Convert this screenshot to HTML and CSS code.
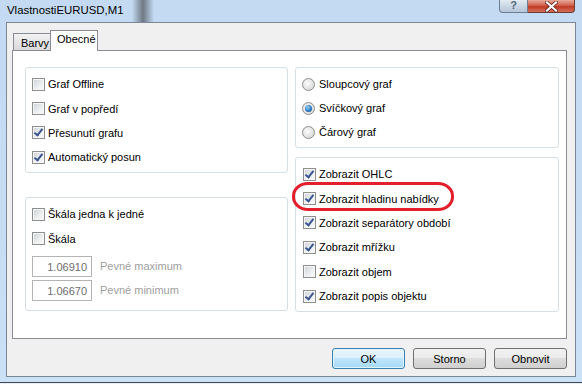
FILE: index.html
```html
<!DOCTYPE html>
<html lang="cs">
<head>
    <meta charset="UTF-8">
    <title>VlastnostiEURUSD,M1</title>
    <link rel="stylesheet" href="styles.css">
</head>
<body>
<div class="window">
    <div class="titlebar">
        <span class="title">VlastnostiEURUSD,M1</span>
        <div class="caption">
            <span class="cap-help">?</span>
            <span class="cap-close">
                <svg width="13" height="11" viewBox="0 0 13 11"><path d="M2 1.5 L11 9.5 M11 1.5 L2 9.5" stroke="#5a1d14" stroke-width="3.6" stroke-linecap="square"/><path d="M2 1.5 L11 9.5 M11 1.5 L2 9.5" stroke="#fff" stroke-width="2.2" stroke-linecap="square"/></svg>
            </span>
        </div>
    </div>
    <div class="client">
        <div class="tabstrip">
            <div class="tab">Barvy</div>
            <div class="tab active">Obecné</div>
        </div>
        <div class="panel">
            <div class="col col-left">
                <div class="group g-view">
                    <label class="row"><span class="cb"></span>Graf Offline</label>
                    <label class="row"><span class="cb"></span>Graf v popředí</label>
                    <label class="row"><span class="cb on"></span>Přesunutí grafu</label>
                    <label class="row"><span class="cb on"></span>Automatický posun</label>
                </div>
                <div class="group g-scale">
                    <label class="row"><span class="cb"></span>Škála jedna k jedné</label>
                    <label class="row"><span class="cb"></span>Škála</label>
                    <div class="field first">
                        <span class="input">1.06910</span>
                        <span class="field-label">Pevné maximum</span>
                    </div>
                    <div class="field">
                        <span class="input">1.06670</span>
                        <span class="field-label">Pevné minimum</span>
                    </div>
                </div>
            </div>
            <div class="col col-right">
                <div class="group g-type">
                    <label class="row radio-row"><span class="rb"></span>Sloupcový graf</label>
                    <label class="row radio-row"><span class="rb on"></span>Svíčkový graf</label>
                    <label class="row radio-row"><span class="rb"></span>Čárový graf</label>
                </div>
                <div class="group g-show">
                    <label class="row"><span class="cb on"></span>Zobrazit OHLC</label>
                    <label class="row"><span class="cb on"></span>Zobrazit hladinu nabídky</label>
                    <label class="row"><span class="cb on"></span>Zobrazit separátory období</label>
                    <label class="row"><span class="cb on"></span>Zobrazit mřížku</label>
                    <label class="row"><span class="cb"></span>Zobrazit objem</label>
                    <label class="row"><span class="cb on"></span>Zobrazit popis objektu</label>
                    <div class="mark"></div>
                </div>
            </div>
        </div>
        <div class="buttons">
            <button type="button" class="btn default">OK</button>
            <button type="button" class="btn">Storno</button>
            <button type="button" class="btn">Obnovit</button>
        </div>
    </div>
</div>
</body>
</html>
```

FILE: styles.css
```css
body {
    margin: 0;
    background: #e9eef4;
    font-family: 'Liberation Sans', Arial, sans-serif;
    font-size: 11px;
    color: #000;
}
.window {
    width: 582px;
    height: 382px;
    border-bottom: 1px solid #3f4a58;
    background:
        linear-gradient(90deg, transparent 132px, rgba(40, 40, 40, 0.55) 143px, transparent 154px) 0 0 / 100% 22px no-repeat,
        linear-gradient(180deg, #c3daf2, #c6ddf4 60%, #cbe1f6);
}
.titlebar {
    height: 22px;
    display: flex;
    align-items: flex-start;
}
.title {
    font-size: 11.4px;
    padding: 4px 0 0 7px;
    color: #000;
}
.caption {
    display: flex;
    margin-left: auto;
    margin-right: 7px;
}
.cap-help {
    width: 27px;
    height: 12px;
    border: 1px solid #6f7f92;
    border-top: none;
    border-radius: 0 0 0 4px;
    background: linear-gradient(180deg, #e4ebf3, #c9d6e4 50%, #b7c7d9);
    color: #556677;
    font-weight: bold;
    font-size: 11px;
    line-height: 11px;
    text-align: center;
}
.cap-close {
    width: 46px;
    height: 12px;
    border: 1px solid #6b3a33;
    border-left: none;
    border-top: none;
    border-radius: 0 0 4px 0;
    background: linear-gradient(180deg, #e9a99b, #d0604b 45%, #c03a26 55%, #d5705a);
    display: flex;
    justify-content: center;
    align-items: center;
}
.client {
    box-sizing: border-box;
    margin-left: 6px;
    width: 570px;
    height: 355px;
    border: 1px solid #7b8796;
    background: #f0f0f0;
    padding: 7px 0 0 5px;
}
.tabstrip {
    display: flex;
    align-items: flex-end;
    height: 20px;
    padding-left: 1px;
}
.tab {
    box-sizing: border-box;
    width: 37px;
    height: 17px;
    border: 1px solid #898c95;
    border-right: none;
    border-bottom: none;
    background: linear-gradient(180deg, #f3f3f3, #e5e5e5 50%, #d9d9d9);
    padding: 3px 0 0 7px;
}
.tab.active {
    position: relative;
    width: 48px;
    height: 21px;
    margin-bottom: -1px;
    border-right: 1px solid #898c95;
    background: #fff;
    padding: 2px 0 0 6px;
}
.panel {
    box-sizing: border-box;
    width: 555px;
    height: 289px;
    border: 1px solid #898c95;
    background: #fff;
    padding: 16px 0 0 12px;
    display: flex;
    gap: 7px;
}
.col {
    display: flex;
    flex-direction: column;
}
.col-left {
    width: 263px;
    gap: 24px;
}
.col-right {
    width: 264px;
    gap: 9px;
}
.group {
    position: relative;
    box-sizing: border-box;
    border: 1px solid #d5dfe5;
    border-radius: 3px;
    padding: 4px 0 0 6px;
}
.g-view { height: 106px; }
.g-scale { height: 114px; }
.g-type { height: 81px; }
.g-show { height: 155px; padding-left: 7px; }
.row {
    display: flex;
    align-items: center;
    height: 24.4px;
    gap: 3px;
}
.radio-row {
    height: 24px;
    gap: 4px;
}
.cb {
    position: relative;
    box-sizing: border-box;
    width: 13px;
    height: 13px;
    border: 1px solid #8e8f8f;
    background: linear-gradient(135deg, #cdd1d6, #eef0f2 60%, #fafafa);
    box-shadow: inset 0 0 0 1px #f6f6f6;
    flex: none;
}
.cb.on::after {
    content: '';
    position: absolute;
    left: 3px;
    top: 0;
    width: 3px;
    height: 7px;
    border: solid #3b5590;
    border-width: 0 2px 2px 0;
    transform: rotate(38deg);
}
.rb {
    position: relative;
    box-sizing: border-box;
    width: 13px;
    height: 13px;
    border: 1px solid #8e8f8f;
    border-radius: 50%;
    background: radial-gradient(circle at 40% 40%, #fdfdfd, #dcdcdc 70%, #cfcfcf);
    flex: none;
}
.rb.on::after {
    content: '';
    position: absolute;
    left: 2px;
    top: 2px;
    width: 7px;
    height: 7px;
    border-radius: 50%;
    background: radial-gradient(circle at 40% 35%, #9ad4f6, #2f7cc4 55%, #154a86);
}
.field {
    display: flex;
    align-items: center;
    margin: 3px 0 0 0;
}
.field.first {
    margin-top: 5px;
}
.input {
    box-sizing: border-box;
    width: 60px;
    height: 21px;
    border: 1px solid #b4b4b4;
    background: #fff;
    color: #6d6d6d;
    text-align: right;
    padding: 4px 4px 0 0;
}
.field-label {
    margin-left: 8px;
    color: #a0a0a0;
}
.mark {
    position: absolute;
    left: -4px;
    top: 24px;
    width: 156px;
    height: 23px;
    border: 3px solid #e41e2a;
    border-radius: 16px / 14px;
}
.buttons {
    display: flex;
    justify-content: flex-end;
    gap: 8px;
    margin-top: 9px;
    padding-right: 1px;
    width: 555px;
}
.btn {
    box-sizing: border-box;
    width: 73px;
    height: 21px;
    border: 1px solid #707070;
    border-radius: 3px;
    background: linear-gradient(180deg, #f2f2f2, #ebebeb 50%, #dddddd 50%, #cfcfcf);
    font-family: 'Liberation Sans', Arial, sans-serif;
    font-size: 11px;
    color: #000;
    padding: 0;
}
.btn.default {
    border-color: #3c7fb1;
    background: linear-gradient(180deg, #eaf6fd, #d9f0fc 50%, #bee6fd 50%, #a7d9f5);
    box-shadow: inset 0 0 0 1px #def4fe;
}
```
